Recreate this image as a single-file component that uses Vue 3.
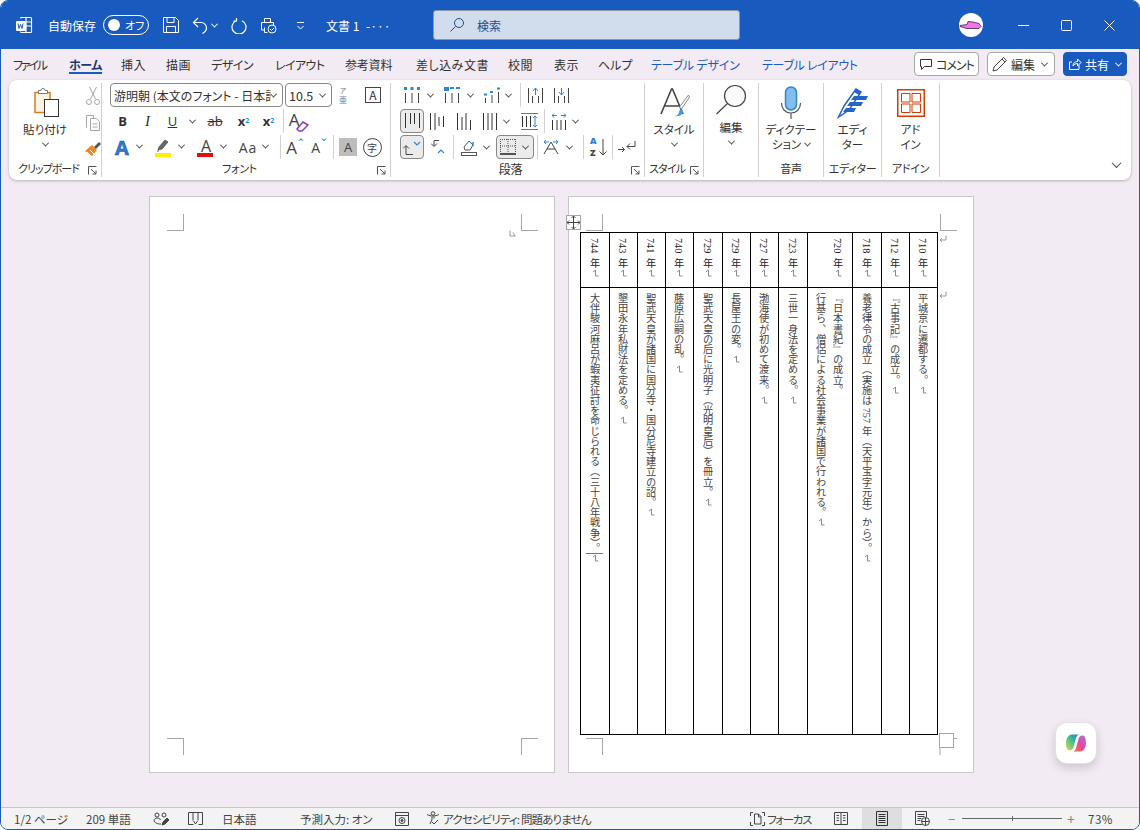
<template>
  <div class="window">
    <!-- title bar -->
    <header class="titlebar">
      <svg class="word" width="17" height="18" viewBox="0 0 17 18" fill="none" stroke="#fff" stroke-width="1.2">
        <path d="M4.5 2.5a1 1 0 0 1 1-1h9a1 1 0 0 1 1 1v13a1 1 0 0 1-1 1h-9a1 1 0 0 1-1-1M10 1.5v15M10 6h5.5M10 10h5.5" />
        <rect x="0.5" y="5.5" width="9" height="9" rx="1" fill="#fff" />
        <path d="M2 7.5l1 5 1.5-4 1.5 4 1-5" stroke="#185abd" stroke-width="1" />
      </svg>
      <span class="autosave">自動保存</span>
      <span class="toggle"><i class="knob"></i>オフ</span>
      <svg class="save" width="16" height="16" viewBox="0 0 16 16" fill="none" stroke="#fff">
        <path d="M.5.5h12l3 3v12H.5zM4 .5v5h7v-5M3.5 15.5v-6h9v6" />
      </svg>
      <svg class="undo" width="16" height="17" viewBox="0 0 16 17" fill="none" stroke="#fff" stroke-width="1.2">
        <path d="M6 1L1.5 5.5 6 10M2 5.500h7a5.500 5.500 0 0 1 5.500 5.500c0 2.500-1.500 4-4 5.500" />
      </svg>
      <i class="chev white undo-chev"></i>
      <svg class="redo" width="16" height="17" viewBox="0 0 16 17" fill="none" stroke="#fff" stroke-width="1.2">
        <path d="M5 3.200a7 7 0 1 0 6 0M5.500 0.500v3h-3" transform="translate(0 .5)" />
      </svg>
      <svg class="print" width="17" height="17" viewBox="0 0 17 17" fill="none" stroke="#fff">
        <path d="M4.500 5V1.500h6V5M4 13H1.500V5.500h12V8M4.500 10.500V15.500h3" />
        <circle cx="12" cy="12" r="4" />
        <path d="M10 12l1.500 1.500L14 11" />
      </svg>
      <svg class="more" width="9" height="9" viewBox="0 0 9 9" fill="none" stroke="#fff">
        <path d="M1 1.500h7M1.500 5l3 3 3-3" />
      </svg>
      <span class="docname">文書 1</span>
      <span class="docmore">-···</span>
      <div class="search">
        <svg width="16" height="16" viewBox="0 0 16 16" fill="none" stroke="#1f4e8c">
          <circle cx="10" cy="6" r="4.500" />
          <path d="M6.500 9.500L1.500 14.500" />
        </svg>
        <span>検索</span>
      </div>
      <span class="avatar">
        <svg width="24" height="12" viewBox="0 0 24 12">
          <path d="M1 6.500l7-1 1-3 5 .5 6 1.500 2 3-2 2H8l-7-2z" fill="#ee77e6" stroke="#4a1a4a" stroke-width=".8" />
        </svg>
      </span>
      <div class="winctl">
        <svg width="11" height="11" viewBox="0 0 11 11" stroke="#fff" fill="none"><path d="M0 5.500h11" /></svg>
        <svg width="11" height="11" viewBox="0 0 11 11" stroke="#fff" fill="none"><rect x=".5" y=".5" width="10" height="10" rx="1" /></svg>
        <svg width="11" height="11" viewBox="0 0 11 11" stroke="#fff" fill="none"><path d="M.5.5l10 10M10.500.5l-10 10" /></svg>
      </div>
    </header>

    <!-- tabs -->
    <nav class="tabs">
      <span
        v-for="tab in tabs"
        :key="tab.name"
        class="tab"
        :class="{ active: tab.active, context: tab.context }"
        :style="{ width: tab.slot + 'px', letterSpacing: tab.track + 'px' }"
      ><span>{{ tab.name }}</span></span>
      <div class="tab-actions">
        <button class="action comment">
          <svg width="14" height="14" viewBox="0 0 14 14" fill="none" stroke="#333"><path d="M1.500 2.500h11v7h-7l-3 3v-3h-1z" /></svg>
          <span>コメント</span>
        </button>
        <button class="action edit">
          <svg width="16" height="16" viewBox="0 0 16 16" fill="none" stroke="#444"><path d="M2 11L11.500 1.500l3 3L5 14l-4 1zM10 3l3 3" /></svg>
          <span>編集</span><i class="chev"></i>
        </button>
        <button class="action share">
          <svg width="14" height="14" viewBox="0 0 14 14" fill="none" stroke="#fff"><path d="M11 8v4.500H1.500V5H4M5 9c0-3 2-4.500 4.500-4.500V2l3.500 3.500L9.500 9V6.500C7.500 6.500 6 7.500 5 9z" /></svg>
          <span>共有</span><i class="chev white"></i>
        </button>
      </div>
    </nav>

    <!-- ribbon -->
    <section class="ribbon">
      <div class="group clip">
        <div class="clip-body">
          <div class="big paste">
            <svg class="big-ic" width="30" height="32" viewBox="0 0 30 32" fill="none">
              <path d="M5 5.500h15v20H5z" fill="#fdf3e4" stroke="#d67f22" stroke-width="1.500" />
              <path d="M8.500 6.500V3.500h2.500a2 2 0 0 1 4 0h2.500v3z" fill="#fff" stroke="#777" />
              <rect x="14.500" y="12.500" width="14" height="17" fill="#fff" stroke="#333" />
            </svg>
            <span>貼り付け</span>
            <i class="chev"></i>
          </div>
          <div class="clip-tools">
            <svg width="16" height="20" viewBox="0 0 16 20" fill="none" stroke="#a6a6a6">
              <path d="M4.500 1l6 12M11.500 1l-6 12" /><circle cx="4" cy="16" r="2.500" /><circle cx="12" cy="16" r="2.500" />
            </svg>
            <svg width="16" height="18" viewBox="0 0 16 18" fill="none" stroke="#a6a6a6">
              <path d="M1.500 13.500V1.500h7v3M5.500 4.500h6l3 3v9h-9zM7.500 10h5M7.500 13h5" />
            </svg>
            <svg width="18" height="18" viewBox="0 0 18 18">
              <path d="M8 5L13 10 8 16 1 11z" fill="#ee8a27" />
              <path d="M3 12l3 3M6 10l4 4" stroke="#fff" />
              <path d="M10 7l5-5 2 2-5 5z" fill="#555" />
            </svg>
          </div>
        </div>
        <div class="label">クリップボード<svg class="launch" width="9" height="9" viewBox="0 0 9 9" fill="none" stroke="#555"><path d="M.5 8.500V.5h8M3 3l5 5M8 4.500V8H4.500" /></svg></div>
      </div>

      <div class="group font">
        <div class="rows">
          <div class="row">
            <div class="combo face"><span>游明朝 (本文のフォント - 日本語)</span><i class="chev"></i></div>
            <div class="combo size"><span>10.5</span><i class="chev"></i></div>
            <span class="ruby"><small>ア</small><span>亜</span></span>
            <span class="boxed">A</span>
          </div>
          <div class="row">
            <span class="tb fmt bold">B</span>
            <span class="tb fmt ital">I</span>
            <span class="tb fmt under">U</span><i class="chev gap-ch"></i>
            <span class="tb fmt strike">ab</span>
            <span class="tb fmt bold">x<sub>2</sub></span>
            <span class="tb fmt bold">x<sup>2</sup></span>
            <i class="sep"></i>
            <span class="tb clear"><span>A</span><svg width="14" height="12" viewBox="0 0 14 12"><path d="M1 9l6-7 5 3-6 6H3z" fill="#fff" stroke="#8e3fb5" stroke-width="1.500" /></svg></span>
          </div>
          <div class="row wide-chevs">
            <span class="tb fxA">A</span><i class="chev"></i>
            <span class="tb">
              <svg width="18" height="20" viewBox="0 0 18 20"><path d="M3 13l1-3 6-7 3 2-6 7zM2 14l2 0" fill="#666" stroke="#666" /><rect x="0" y="16" width="16" height="4" fill="#ffee00" /></svg>
            </span><i class="chev"></i>
            <span class="tb colorA">A</span><i class="chev"></i>
            <span class="tb caseA">Aa</span><i class="chev"></i>
            <i class="sep"></i>
            <span class="tb growA">A<b>ˆ</b></span>
            <span class="tb growA down">A<b>ˇ</b></span>
            <i class="sep"></i>
            <span class="tb shade"><span>A</span></span>
            <span class="tb circled"><span>字</span></span>
          </div>
        </div>
        <div class="label">フォント<svg class="launch" width="9" height="9" viewBox="0 0 9 9" fill="none" stroke="#555"><path d="M.5 8.500V.5h8M3 3l5 5M8 4.500V8H4.500" /></svg></div>
      </div>

      <div class="group para">
        <div class="rows">
          <div class="row r1">
            <svg class="i1" width="16" height="16" viewBox="0 0 16 16" fill="none" stroke="#444"><path d="M1.500 6v10M8 6v10M14.500 6v10" /><path d="M0 0h3v3H0zM6.500 0h3v3h-3zM13 0h3v3h-3z" fill="#2b88d8" stroke="none" /></svg><i class="chev c1"></i>
            <svg class="i2" width="16" height="16" viewBox="0 0 16 16" fill="none" stroke="#444"><path d="M1.500 6v10M8 6v10M14.500 6v10" /><path d="M0 1h4v2H0zM6 1h4M12 1h4" stroke="#2b88d8" stroke-width="2" /></svg><i class="chev c2"></i>
            <svg class="i3" width="17" height="16" viewBox="0 0 17 16" fill="none" stroke="#444"><path d="M1.500 11v5M8 8v8M14.500 5v11" /><path d="M0 7.500h3M6 5h3M13 1.500h3" stroke="#2b88d8" stroke-width="2" /></svg><i class="chev c3"></i>
            <i class="sep s1"></i>
            <svg class="i4" width="15" height="16" viewBox="0 0 15 16" fill="none" stroke="#444"><path d="M.5 1v15M14.500 1v15M4.500 9v7M10.500 9v7" /><path d="M7.500 8V1M5 4l2.500-3L10 4" stroke="#2b88d8" /></svg>
            <svg class="i5" width="15" height="16" viewBox="0 0 15 16" fill="none" stroke="#444"><path d="M.5 1v15M14.500 1v15M4.500 9v7M10.500 9v7" /><path d="M7.500 1v7M5 5l2.500 3L10 5" stroke="#2b88d8" /></svg>
          </div>
          <div class="row r2">
            <span class="picked p1"><svg width="15" height="17" viewBox="0 0 15 17" fill="none" stroke="#333"><path d="M.5 0v15M5.500 0v11M9.500 0v11M14.500 0v15" /></svg></span>
            <svg class="j1" width="14" height="17" viewBox="0 0 14 17" fill="none" stroke="#333"><path d="M.5 0v17M5 0v17M9 4v9M13.500 3v11" /></svg>
            <svg class="j2" width="14" height="17" viewBox="0 0 14 17" fill="none" stroke="#333"><path d="M.5 0v17M5 4v13M9 0v17M13.500 7v10" /></svg>
            <svg class="j3" width="14" height="17" viewBox="0 0 14 17" fill="none" stroke="#333"><path d="M.5 0v17M5 0v17M9 0v17M13.500 0v17" /></svg><i class="chev c4"></i>
            <svg class="j4" width="17" height="17" viewBox="0 0 17 17" fill="none" stroke="#333"><path d="M0 .5h17M0 16.500h17" stroke="#2b88d8" /><path d="M1.500 3v11M5.500 3v11M9.500 3v11" /><path d="M14 3v11M12 5l2-2 2 2M12 12l2 2 2-2" stroke="#2b88d8" /></svg>
            <i class="sep s2"></i>
            <svg class="j5" width="14" height="17" viewBox="0 0 14 17" fill="none" stroke="#333"><path d="M.5 7v10M5 7v10M9 7v10M13.500 7v10" /><path d="M0 2.500h5M2 .5l-2 2 2 2M9 2.500h5M12 .5l2 2-2 2" stroke="#2b88d8" /></svg><i class="chev c5"></i>
          </div>
          <div class="row r3">
            <span class="picked p2">
              <svg width="18" height="15" viewBox="0 0 18 15" fill="none" stroke="#444"><path d="M0 8.500l3-3 3 3M3 6v8.500h7" /><path d="M11 2l3 3 3-3" stroke="#2b88d8" stroke-width="1.200" /></svg>
            </span>
            <svg class="k1" width="14" height="15" viewBox="0 0 14 15" fill="none" stroke="#444"><path d="M0 3.500l3 3 3-3M3 6V.5h5" /><path d="M7 13l3-3 3 3" stroke="#2b88d8" stroke-width="1.200" /></svg>
            <i class="sep s3"></i>
            <svg class="k2" width="16" height="18" viewBox="0 0 16 18" fill="none" stroke="#555"><path d="M3 9l5-6 4 4-3 5H4z" /><path d="M12 8V4" stroke="#2b88d8" stroke-width="1.500" /><rect x=".5" y="14.500" width="15" height="3" /></svg><i class="chev c6"></i>
            <span class="picked p3">
              <svg width="16" height="16" viewBox="0 0 16 16" fill="none" stroke="#555" stroke-dasharray="1 1"><path d="M.5 0v13M15.500 0v13M8 0v13M0 .5h16M0 7h16" /><path d="M0 15h16" stroke="#222" stroke-dasharray="none" stroke-width="1.400" /></svg>
              <i class="chev"></i>
            </span>
            <i class="sep s4"></i>
            <svg class="k3" width="16" height="16" viewBox="0 0 16 16" fill="none" stroke="#444"><path d="M1 15l7-12 7 12M4 10h8" /><path d="M1 3h5M3 1L1 3l2 2M10 3h5M13 1l2 2-2 2" stroke="#2b88d8" /></svg><i class="chev c7"></i>
            <i class="sep s5"></i>
            <span class="sort"><span><b>A</b><b>Z</b></span><svg width="8" height="17" viewBox="0 0 8 17" fill="none" stroke="#444"><path d="M4 0v16M.5 12.500L4 16l3.500-3.500" /></svg></span>
            <i class="sep s6"></i>
            <svg class="k4" width="18" height="14" viewBox="0 0 18 14" fill="none" stroke="#444"><path d="M17 1v5.500H9M12 3.500L9 6.500l3 3" /><path d="M0 9.500h6M4 7l2.500 2.500L4 12" /></svg>
          </div>
        </div>
        <div class="label">段落<svg class="launch" width="9" height="9" viewBox="0 0 9 9" fill="none" stroke="#555"><path d="M.5 8.500V.5h8M3 3l5 5M8 4.500V8H4.500" /></svg></div>
      </div>

      <div class="group style">
        <div class="big">
          <svg class="big-ic" width="32" height="34" viewBox="0 0 32 34" fill="none">
            <path d="M2 28L12.500 3h1L24 28M6 20h14" stroke="#444" stroke-width="1.600" />
            <path d="M29.500 9l-9 12 2 2 8-12z" fill="#fff" stroke="#888" />
            <path d="M15.500 30c3 0 4-2 4.500-4 .3-2 2-3.500 3.500-2 1 1 .5 3-1 4.500-1.500 1.500-4 2-7 1.500z" fill="#4a9bdc" />
          </svg>
          <span>スタイル</span>
          <i class="chev"></i>
        </div>
        <div class="label">スタイル<svg class="launch" width="9" height="9" viewBox="0 0 9 9" fill="none" stroke="#555"><path d="M.5 8.500V.5h8M3 3l5 5M8 4.500V8H4.500" /></svg></div>
      </div>

      <div class="group edit-g">
        <div class="big up">
          <svg class="big-ic" width="32" height="32" viewBox="0 0 32 32" fill="none" stroke="#444" stroke-width="1.200">
            <circle cx="20" cy="12" r="10.500" fill="#fafafa" />
            <path d="M12.500 19.500L1.500 30" />
          </svg>
          <span>編集</span>
          <i class="chev"></i>
        </div>
      </div>

      <div class="group voice">
        <div class="big">
          <svg class="big-ic" width="22" height="34" viewBox="0 0 22 34" fill="none">
            <rect x="5.500" y="1" width="11" height="23" rx="5.500" fill="#83bdea" stroke="#2b88d8" stroke-width="1.500" />
            <path d="M1.500 17c0 6 4 10 9.500 10s9.500-4 9.500-10M11 27v6" stroke="#555" stroke-width="1.200" />
          </svg>
          <span>ディクテー</span>
          <span>ション<i class="chev inline"></i></span>
        </div>
        <div class="label">音声</div>
      </div>

      <div class="group editor">
        <div class="big">
          <svg class="big-ic" width="32" height="32" viewBox="0 0 32 32" fill="none">
            <path d="M1.500 30L7 19 19 2l5 3-12 18z" fill="#fff" stroke="#2564c9" stroke-width="1.500" />
            <path d="M19 2l5 3-2 3-5-3z" fill="#2564c9" />
            <path d="M17 9h14l-2 4H14zM13 15h13l-2 4H10zM9 21h10l-2 4H6z" fill="#2564c9" />
          </svg>
          <span>エディ</span>
          <span>ター</span>
        </div>
        <div class="label">エディター</div>
      </div>

      <div class="group addin">
        <div class="big">
          <svg class="big-ic" width="28" height="28" viewBox="0 0 28 28" fill="none" stroke="#d83b01">
            <rect x=".75" y=".75" width="26.500" height="26.500" stroke-width="1.500" />
            <path d="M4.500 4.500h8.500v8.500H4.500zM15 4.500h8.500v8.500H15zM4.500 15h8.500v8.500H4.500zM15 15h8.500v8.500H15z" />
          </svg>
          <span>アド</span>
          <span>イン</span>
        </div>
        <div class="label">アドイン</div>
      </div>

      <i class="chev collapse"></i>
    </section>

    <!-- document area -->
    <main class="canvas">
      <div class="page">
        <i class="crop tl"></i><i class="crop tr"></i><i class="crop bl"></i><i class="crop br"></i>
        <svg class="pmark first" width="7" height="7" viewBox="0 0 7 7" fill="none" stroke="#9a9a9a"><path d="M1 .5v5.500h5.500M4 2.500L6 6" /></svg>
      </div>
      <div class="page second">
        <i class="crop tl"></i><i class="crop tr"></i><i class="crop bl"></i>
        <span class="handle">
          <svg width="13" height="13" viewBox="0 0 13 13" fill="none" stroke="#444"><path d="M6.500 0v13M0 6.500h13M4.500 2l2-2 2 2M4.500 11l2 2 2-2M2 4.500l-2 2 2 2M11 4.500l2 2-2 2" /></svg>
        </span>
        <svg class="pmark row1" width="8" height="8" viewBox="0 0 8 8" fill="none" stroke="#9a9a9a"><path d="M7 .5v4.500H1M3 3L1 5l2 2" /></svg>
        <svg class="pmark row2" width="8" height="8" viewBox="0 0 8 8" fill="none" stroke="#9a9a9a"><path d="M7 .5v4.500H1M3 3L1 5l2 2" /></svg>
        <div class="table">
          <div
            v-for="col in events"
            :key="col.year + col.lines[0]"
            class="col"
            :style="{ width: col.width + 'px' }"
          >
            <div class="cell year">{{ col.year }}<svg class="mark" width="7" height="8" viewBox="0 0 7 8" fill="none" stroke="#8c8c8c"><path d="M3.500 1v6M1 3l2.500-2M3.500 7H6.500" /></svg></div>
            <div class="cell body">
              <p v-for="(line, i) in col.lines" :key="i">{{ line }}<span v-if="i === col.lines.length - 1" class="endmark" :class="{ ruled: col.ruled }"><svg class="mark" width="7" height="8" viewBox="0 0 7 8" fill="none" stroke="#8c8c8c"><path d="M3.500 1v6M1 3l2.500-2M3.500 7H6.500" /></svg></span></p>
            </div>
          </div>
        </div>
        <svg class="lastcrop" width="22" height="24" viewBox="0 0 22 24" fill="none" stroke="#a6a6a6">
          <rect x=".5" y=".5" width="14" height="14" fill="#fff" />
          <path d="M15 5.500h3M1 15v7" />
        </svg>
      </div>
      <button class="copilot">
        <svg width="22" height="22" viewBox="0 0 22 22">
          <defs>
            <linearGradient id="cpA" x1="0" y1="1" x2="1" y2="0">
              <stop offset="0" stop-color="#f6d33c" />
              <stop offset=".5" stop-color="#3fc48b" />
              <stop offset="1" stop-color="#1b75e0" />
            </linearGradient>
            <linearGradient id="cpB" x1="0" y1="1" x2="1" y2="0">
              <stop offset="0" stop-color="#f6763e" />
              <stop offset=".5" stop-color="#e2489f" />
              <stop offset="1" stop-color="#a673e8" />
            </linearGradient>
          </defs>
          <path d="M7 2.500h7c-1.800.5-2.500 2-3 3.500l-2.500 9c-.5 2-2 3.500-4 3.500C2 18.500 1 15 1 11c0-4 2-8.500 6-8.500z" fill="url(#cpA)" />
          <path d="M15 19.500H8c1.800-.5 2.500-2 3-3.500l2.500-9c.5-2 2-3.500 4-3.500C20 3.500 21 7 21 11c0 4-2 8.500-6 8.500z" fill="url(#cpB)" />
        </svg>
      </button>
    </main>

    <!-- status bar -->
    <footer class="status">
      <span class="st pageinfo">1/2 ページ</span>
      <span class="st words">209 単語</span>
      <svg class="st-ic proof" width="16" height="14" viewBox="0 0 16 14" fill="none" stroke="#444"><circle cx="4" cy="3" r="2" /><circle cx="11" cy="3" r="2" /><path d="M1 9c0-2 1.500-3 3-3s3 .5 3.500 2M1 9c2 3 5 3 7 3" /><path d="M9 13l1-3 4-4 2 2-4 4z" fill="#444" /></svg>
      <svg class="st-ic book" width="15" height="14" viewBox="0 0 15 14" fill="none" stroke="#444"><path d="M.5.500h14v12h-4M.5.500v12h5M5 .5v8M10 .5v8M5.500 9l2 3 2-3" /></svg>
      <span class="st lang">日本語</span>
      <span class="st predict">予測入力: オン</span>
      <svg class="st-ic macro" width="14" height="14" viewBox="0 0 14 14" fill="none" stroke="#444"><path d="M.5.500h13v13H.5zM.5 3.500h13" /><circle cx="7" cy="8.500" r="3" /><circle cx="7" cy="8.500" r="1" fill="#444" /></svg>
      <svg class="st-ic access" width="14" height="15" viewBox="0 0 14 15" fill="none" stroke="#444"><circle cx="7" cy="2.500" r="1.800" /><path d="M1 3.500c2 1 4 1.500 6 1.500s4-.5 6-1.500M6 5.500v3L4 13M8 5.500v2" /><path d="M6 11l2 2 4-4" /></svg>
      <span class="st a11y">アクセシビリティ: 問題ありません</span>
      <svg class="st-ic focus" width="15" height="14" viewBox="0 0 15 14" fill="none" stroke="#444"><path d="M.5 4V.5H3M14.500 4V.5H12M.5 10v3.500H3M14.500 10v3.500H12M4.500 2h4l2.500 2.500v7.500h-6.500zM8.500 2v3h2.500" /></svg>
      <span class="st focustxt">フォーカス</span>
      <svg class="st-ic read" width="14" height="13" viewBox="0 0 14 13" fill="none" stroke="#444"><path d="M.5.500h13v12H.5zM7 .5v12M2.500 3.500h2.500M2.500 6h2.500M2.500 8.500h2.500M9 3.500h2.500M9 6h2.500M9 8.500h2.500" /></svg>
      <span class="view-on">
        <svg width="12" height="15" viewBox="0 0 12 15" fill="none" stroke="#333"><path d="M.5.500h11v14H.5zM2.500 3.500h7M2.500 5.500h7M2.500 7.500h7M2.500 9.500h7M2.500 11.500h7" /></svg>
      </span>
      <svg class="st-ic web" width="15" height="15" viewBox="0 0 15 15" fill="none" stroke="#444"><path d="M7 13.500H.5V.5h11v6M2.500 3.500h7M2.500 5.500h7M2.500 7.500h4M2.500 9.500h3" /><circle cx="10.500" cy="10.500" r="4" fill="#f3f3f3" /><path d="M6.500 10.500h8M10.500 6.500v8" /></svg>
      <span class="zoom-minus">−</span>
      <span class="slider"><i></i></span>
      <span class="zoom-plus">+</span>
      <span class="st pct">73%</span>
    </footer>
  </div>
</template>

<script setup>
const tabs = [
  { name: 'ファイル', slot: 56, track: -2.2 },
  { name: 'ホーム', slot: 52, track: -0.5, active: true },
  { name: '挿入', slot: 45, track: 0.4 },
  { name: '描画', slot: 45, track: 0.4 },
  { name: 'デザイン', slot: 64, track: -0.5 },
  { name: 'レイアウト', slot: 70, track: -0.6 },
  { name: '参考資料', slot: 71, track: -0.2 },
  { name: '差し込み文書', slot: 92, track: 0.5 },
  { name: '校閲', slot: 46, track: 0.4 },
  { name: '表示', slot: 44, track: 0.4 },
  { name: 'ヘルプ', slot: 53, track: 0 },
  { name: 'テーブル デザイン', slot: 111, track: -0.2, context: true },
  { name: 'テーブル レイアウト', slot: 100, track: -0.3, context: true },
]

// listed right to left, the way the vertical table reads
const events = [
  { year: '710 年', width: 28, lines: ['平城京に遷都する。'] },
  { year: '712 年', width: 28, lines: ['『古事記』の成立。'] },
  { year: '718 年', width: 29, lines: ['養老律令の成立（実施は 757 年（天平宝字元年）から）。'] },
  { year: '720 年', width: 45, lines: ['『日本書紀』の成立。', '行基ら、僧侶による社会事業が諸国で行われる。'] },
  { year: '723 年', width: 29, lines: ['三世一身法を定める。'] },
  { year: '727 年', width: 28, lines: ['渤海使が初めて渡来。'] },
  { year: '729 年', width: 28, lines: ['長屋王の変。'] },
  { year: '729 年', width: 29, lines: ['聖武天皇の后に光明子（光明皇后）を冊立。'] },
  { year: '740 年', width: 28, lines: ['藤原広嗣の乱。'] },
  { year: '741 年', width: 28, lines: ['聖武天皇が諸国に国分寺・国分尼寺建立の詔。'] },
  { year: '743 年', width: 28, lines: ['墾田永年私財法を定める。'] },
  { year: '744 年', width: 29, lines: ['大伴駿河麻呂が蝦夷征討を命じられる（三十八年戦争）。'], ruled: true },
]
</script>

<style>
html,
body {
  margin: 0;
  background: #fff;
}
</style>

<style scoped>
.window {
  width: 1140px;
  height: 830px;
  box-sizing: border-box;
  display: flex;
  flex-direction: column;
  overflow: hidden;
  border: 1px solid #185abd;
  border-radius: 8px;
  background: #f3ebf4;
  color: #323130;
  font: 12px "Noto Sans CJK JP", "Inter", sans-serif;
  font-feature-settings: "palt";
}

/* ---------- title bar ---------- */
.titlebar {
  height: 48px;
  flex: none;
  display: flex;
  align-items: center;
  background: #185abd;
  color: #fff;
}
.word { margin-left: 15px; }
.autosave { margin-left: 15px; width: 48px; }
.toggle {
  width: 46px;
  height: 20px;
  margin-left: 7px;
  box-sizing: border-box;
  border: 1px solid #fff;
  border-radius: 10px;
  display: flex;
  align-items: center;
  gap: 5px;
  padding-left: 4px;
  font-size: 11px;
}
.knob { width: 12px; height: 12px; border-radius: 50%; background: #fff; }
.save { margin-left: 14px; }
.undo { margin-left: 13px; }
.undo-chev { margin-left: 4px; }
.redo { margin-left: 14px; }
.print { margin-left: 13px; }
.more { margin-left: 19px; }
.docname { margin-left: 21px; width: 40px; }
.docmore { width: 24px; }
.search {
  margin-left: 43px;
  width: 307px;
  height: 30px;
  box-sizing: border-box;
  display: flex;
  align-items: center;
  gap: 12px;
  padding-left: 15px;
  background: #d1dded;
  border: 1px solid #8a97a8;
  border-radius: 3px;
  color: #1f4e8c;
}
.avatar {
  margin-left: 219px;
  width: 24px;
  height: 24px;
  border-radius: 50%;
  background: #fff;
  display: flex;
  align-items: center;
}
.winctl {
  display: flex;
  margin-left: 35px;
  gap: 32px;
}

/* ---------- tabs ---------- */
.tabs {
  height: 30px;
  flex: none;
  display: flex;
  align-items: center;
  padding-left: 12px;
  font-size: 12px;
}
.tab { white-space: nowrap; flex: none; }
.tab > span { display: inline-block; position: relative; }
.tab.active { font-weight: 700; color: #1b3a6b; }
.tab.active > span::after {
  content: "";
  position: absolute;
  left: 0;
  right: 0;
  bottom: -1px;
  height: 2px;
  background: #185abd;
}
.tab.context { color: #185abd; }
.tab-actions {
  margin-left: auto;
  display: flex;
  gap: 8px;
  margin-right: 12px;
}
.action {
  height: 24px;
  box-sizing: border-box;
  display: flex;
  align-items: center;
  gap: 3px;
  padding: 0 4px;
  background: #fff;
  border: 1px solid #a8a6a8;
  border-radius: 4px;
  font: inherit;
  font-size: 12px;
  color: #333;
  white-space: nowrap;
}
.action .chev { margin-left: 4px; }
.comment { width: 65px; letter-spacing: -1px; }
.edit { width: 68px; }
.share { width: 64px; background: #185abd; border-color: #185abd; color: #fff; }

/* ---------- ribbon ---------- */
.ribbon {
  height: 100px;
  flex: none;
  box-sizing: border-box;
  margin: 1px 8px 0;
  display: flex;
  align-items: flex-start;
  position: relative;
  background: #fff;
  border-radius: 8px;
  box-shadow: 0 1px 3px rgba(0, 0, 0, .25);
}
.group {
  height: 94px;
  margin-top: 3px;
  box-sizing: border-box;
  flex: none;
  display: flex;
  flex-direction: column;
  border-right: 1px solid #d2d0d2;
  position: relative;
}
.label {
  margin-top: auto;
  height: 17px;
  line-height: 17px;
  text-align: center;
  font-size: 11px;
  white-space: nowrap;
  letter-spacing: -0.3px;
}
.launch { position: absolute; right: 4px; bottom: 2px; }
.clip { width: 93px; }
.clip .label { padding: 0 13px 0 0; letter-spacing: -1px; }
.clip-body { display: flex; }
.clip-tools {
  display: flex;
  flex-direction: column;
  align-items: center;
  gap: 8px;
  padding-top: 3px;
  margin-left: 5px;
  width: 22px;
}
.paste { width: 68px; flex: none; margin-left: 2px; }
.font { width: 289px; padding-left: 8px; }
.font .label { padding-right: 21px; }
.para { width: 254px; padding-left: 9px; }
.para .label { padding-right: 23px; font-size: 12px; }
.style { width: 59px; }
.style .label { text-align: left; padding-left: 4px; letter-spacing: -0.8px; }
.edit-g { width: 55px; }
.voice { width: 65px; }
.editor { width: 58px; }
.addin { width: 58px; }

.big {
  display: flex;
  flex-direction: column;
  align-items: center;
  line-height: 15px;
  font-size: 11.5px;
  padding-top: 3px;
  white-space: nowrap;
}
.big.up { padding-top: 0; }
.big-ic { height: 34px; margin-bottom: 2px; flex: none; }
.big.up .big-ic { margin-bottom: 3px; }
.style .big-ic { margin-left: 2px; }
.big .chev { margin-top: 5px; }
.big .chev.inline { margin: 0 0 2px 4px; }

.rows { display: flex; flex-direction: column; gap: 2px; }
.row { display: flex; align-items: center; height: 24px; }
.tb {
  width: 24px;
  height: 24px;
  flex: none;
  display: flex;
  align-items: center;
  justify-content: center;
  position: relative;
}
.sep {
  width: 1px;
  height: 24px;
  flex: none;
  background: #d2d0d2;
  margin: 0 2px;
}
.chev {
  display: inline-block;
  width: 4px;
  height: 4px;
  box-sizing: content-box;
  flex: none;
  border-right: 1px solid #444;
  border-bottom: 1px solid #444;
  transform: rotate(45deg) translate(-1px, -1px);
}
.chev.white { border-color: #fff; }
.collapse {
  position: absolute;
  right: 11px;
  bottom: 12px;
  width: 6px;
  height: 6px;
}

/* font group */
.combo {
  height: 24px;
  box-sizing: border-box;
  flex: none;
  display: flex;
  align-items: center;
  border: 1px solid #8a8886;
  border-radius: 4px;
  padding: 0 6px 0 3px;
  overflow: hidden;
}
.combo span { flex: 1; overflow: hidden; white-space: nowrap; }
.face { width: 173px; }
.size { width: 47px; margin-left: 2px; font-size: 12.5px; }
.ruby {
  display: flex;
  flex-direction: column;
  align-items: center;
  width: 12px;
  margin-left: 5px;
  font-size: 8px;
  line-height: 10px;
  color: #777;
}
.ruby small { font-size: 7px; line-height: 9px; }
.boxed {
  width: 16px;
  height: 16px;
  box-sizing: border-box;
  margin-left: 16px;
  border: 1px solid #444;
  display: flex;
  align-items: center;
  justify-content: center;
  font-size: 12px;
  line-height: 1;
  color: #333;
}
.fmt { width: 25px; font-family: "Open Sans", sans-serif; font-size: 13px; color: #333; }
.fmt.bold { font-weight: 700; }
.fmt.ital { font-style: italic; font-family: "Liberation Serif", serif; font-size: 15px; }
.fmt.under { text-decoration: underline; font-weight: 400; }
.fmt.strike { text-decoration: line-through; width: 32px; margin-left: 8px; }
.fmt sub, .fmt sup { font-size: 7px; line-height: 0; color: #2b88d8; }
.gap-ch { margin-left: 5px; margin-right: -4px; }
.clear { font: 17px "Open Sans", sans-serif; color: #444; }
.clear span { margin: -4px 0 0 -8px; }
.clear svg { position: absolute; left: 10px; top: 11px; }
.wide-chevs > .chev { margin: 0 10px 2px 3px; }
.fxA { font: 700 20px "Open Sans", sans-serif; color: #2b7cd3; -webkit-text-stroke: .5px #0f4c9e; }
.colorA {
  font: 16px "Open Sans", sans-serif;
  color: #444;
  align-items: flex-start;
}
.colorA::after {
  content: "";
  position: absolute;
  left: 3px;
  right: 5px;
  bottom: 2px;
  height: 4px;
  background: #e01010;
}
.caseA { font: 14px "Open Sans", sans-serif; letter-spacing: 1px; color: #444; }
.growA { font: 17px "Open Sans", sans-serif; color: #444; }
.growA b { color: #2b88d8; font-size: 14px; margin: -6px 0 0 1px; font-weight: 400; }
.growA.down { font-size: 14px; }
.shade span {
  width: 18px;
  height: 18px;
  background: #bdbdbd;
  display: flex;
  align-items: center;
  justify-content: center;
  font: 13px "Open Sans", sans-serif;
  color: #444;
}
.circled span {
  width: 17px;
  height: 17px;
  border: 1px solid #444;
  border-radius: 50%;
  display: flex;
  align-items: center;
  justify-content: center;
  font-size: 10px;
  color: #444;
}

/* paragraph group */
.r1 svg, .r2 svg, .r3 svg { flex: none; }
.picked {
  height: 24px;
  box-sizing: border-box;
  display: flex;
  align-items: center;
  justify-content: center;
  background: #ebebeb;
  border: 1px solid #8a8886;
  border-radius: 4px;
  flex: none;
}
.p1, .p2 { width: 24px; }
.p3 { width: 38px; justify-content: flex-start; padding-left: 3px; gap: 7px; }
.i1 { margin-left: 4px; }
.c1 { margin-left: 8px; }
.i2 { margin-left: 11px; }
.c2 { margin-left: 8px; }
.i3 { margin-left: 11px; }
.c3 { margin-left: 5px; }
.s1 { margin: 0 0 0 9px; }
.i4 { margin-left: 7px; }
.i5 { margin-left: 11px; }
.j1 { margin-left: 6px; }
.j2 { margin-left: 13px; }
.j3 { margin-left: 12px; }
.c4 { margin-left: 7px; }
.j4 { margin-left: 12px; }
.s2 { margin: 0 0 0 6px; }
.j5 { margin-left: 7px; }
.c5 { margin-left: 7px; }
.k1 { margin-left: 7px; }
.s3 { margin: 0 0 0 8px; }
.k2 { margin-left: 7px; }
.c6 { margin-left: 7px; }
.p3 { margin-left: 7px; }
.s4 { margin: 0 0 0 3px; }
.k3 { margin-left: 5px; }
.c7 { margin-left: 8px; }
.s5 { margin: 0 0 0 11px; }
.sort { margin-left: 6px; display: flex; align-items: center; gap: 2px; color: #2b7cd3; }
.sort span { display: flex; flex-direction: column; font: 700 9px/12px "Open Sans", sans-serif; }
.sort b + b { color: #444; }
.s6 { margin: 0 0 0 5px; }
.k4 { margin-left: 5px; }

/* ---------- canvas ---------- */
.canvas {
  flex: 1;
  min-height: 0;
  position: relative;
  display: flex;
  justify-content: center;
  align-items: flex-start;
  gap: 13px;
  padding: 16px 18px 0 0;
  box-sizing: border-box;
}
.page {
  width: 406px;
  height: 577px;
  box-sizing: border-box;
  position: relative;
  flex: none;
  background: #fff;
  border: 1px solid #c8c6c8;
}
.second { padding: 35px 0 0 11px; }
.crop { position: absolute; width: 16px; height: 16px; border: 0 solid #a6a6a6; }
.crop.tl { left: 17px; top: 17px; border-width: 0 1px 1px 0; }
.crop.tr { right: 16px; top: 17px; border-width: 0 0 1px 1px; }
.crop.bl { left: 17px; bottom: 17px; border-width: 1px 1px 0 0; }
.crop.br { right: 16px; bottom: 17px; border-width: 1px 0 0 1px; }
.pmark { position: absolute; }
.pmark.first { left: 359px; top: 33px; }
.pmark.row1 { left: 370px; top: 38px; }
.pmark.row2 { left: 370px; top: 94px; }
.handle {
  position: absolute;
  left: -3px;
  top: 18px;
  width: 15px;
  height: 15px;
  box-sizing: border-box;
  display: flex;
  align-items: center;
  justify-content: center;
  background: #fff;
  border: 1px solid #a6a6a6;
}
.lastcrop { position: absolute; left: 370px; top: 536px; }
.table {
  width: 357px;
  height: 501px;
  box-sizing: content-box;
  display: flex;
  flex-direction: row-reverse;
  border: 1px solid #000;
  border-width: 1px 1px 1px 0;
  font: 10.2px/17px "Liberation Serif", "Noto Sans CJK JP", serif;
  font-feature-settings: normal;
  font-kerning: none;
  color: #444;
}
.col {
  flex: none;
  box-sizing: border-box;
  display: flex;
  flex-direction: column;
  border-left: 1px solid #000;
}
.cell {
  writing-mode: vertical-rl;
  box-sizing: border-box;
  padding: 5px 6px 0 0;
}
.cell p { margin: 0; }
.year { height: 55px; border-bottom: 1px solid #000; word-spacing: 2px; color: #222; }
.body { flex: 1; }
.mark { margin-top: 1px; vertical-align: middle; }
.endmark { position: relative; }
.endmark.ruled::before {
  content: "";
  position: absolute;
  right: -3px;
  left: -3px;
  top: 0;
  height: 1px;
  background: #777;
}
.copilot {
  position: absolute;
  left: 1054px;
  top: 542px;
  width: 42px;
  height: 42px;
  padding: 0;
  display: flex;
  align-items: center;
  justify-content: center;
  background: #fff;
  border: 1px solid #e4e0e6;
  border-radius: 12px;
  box-shadow: 0 4px 10px rgba(0, 0, 0, .16);
}

/* ---------- status bar ---------- */
.status {
  height: 22px;
  flex: none;
  box-sizing: border-box;
  display: flex;
  align-items: center;
  background: #f3f3f3;
  border-top: 1px solid #c8c6c8;
  font-size: 11.5px;
  color: #444;
}
.st { white-space: nowrap; }
.pageinfo { margin-left: 13px; width: 52px; }
.words { margin-left: 20px; width: 48px; }
.proof { margin-left: 19px; }
.book { margin-left: 19px; }
.lang { margin-left: 19px; width: 36px; }
.predict { margin-left: 42px; width: 76px; }
.macro { margin-left: 19px; }
.access { margin-left: 17px; }
.a11y { margin-left: 3px; width: 149px; letter-spacing: -.85px; }
.focus { margin-left: 158px; }
.focustxt { margin-left: 2px; width: 42px; letter-spacing: -1.4px; }
.read { margin-left: 25px; }
.view-on {
  margin-left: 14px;
  width: 40px;
  height: 21px;
  display: flex;
  align-items: center;
  justify-content: center;
  background: #dedede;
}
.web { margin-left: 13px; }
.zoom-minus { margin-left: 18px; width: 12px; color: #888; font-size: 13px; }
.slider {
  width: 100px;
  height: 1px;
  margin-left: 2px;
  background: #666;
  position: relative;
}
.slider i {
  position: absolute;
  left: 50px;
  top: -2px;
  width: 1px;
  height: 5px;
  background: #666;
}
.zoom-plus { margin-left: 5px; width: 14px; color: #888; font-size: 14px; }
.pct { margin-left: 7px; letter-spacing: .5px; }
</style>
